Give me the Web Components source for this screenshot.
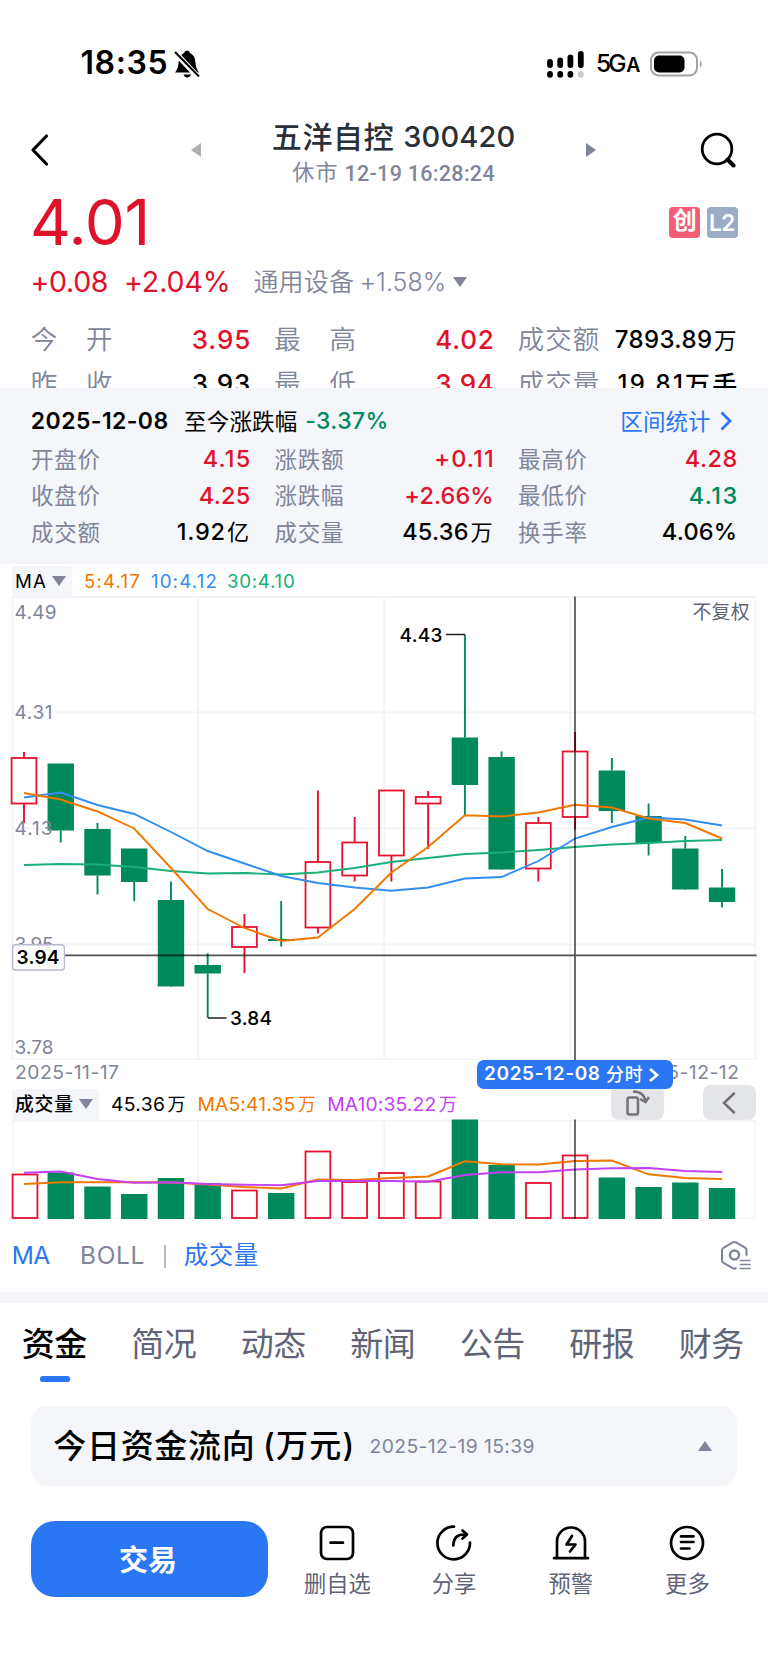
<!DOCTYPE html>
<html lang="zh-CN">
<head>
<meta charset="utf-8">
<title>五洋自控 300420</title>
<style>
html,body{margin:0;background:#fff}
body{width:768px;height:1670px;overflow:hidden;font-family:Inter,"Noto Sans CJK SC",sans-serif;color:#000;
--red:#e0112b;--green:#008a5b;--gray:#80859a;--slate:#5f6478;--blue:#2b76f2;--panel:#f4f6fa}
</style>
</head>
<body>
<stock-page></stock-page>
<script>
const define=(name,html,after)=>{
  const tpl=document.createElement('template');
  tpl.innerHTML=html;
  customElements.define(name,class extends HTMLElement{
    constructor(){super();this.attachShadow({mode:'open'}).appendChild(tpl.content.cloneNode(true));}
    connectedCallback(){if(after)after.call(this,this.shadowRoot);}
  });
};
const base=`:host,*{box-sizing:border-box}.r{display:flex;align-items:center}`;

/* A single line of text spread over a given width through its letter spacing. */
define('fit-text',`<style>:host{display:block;flex:none;white-space:nowrap;line-height:1.2;margin:0 -.05em}span{display:inline-block}</style><span><slot></slot></span>`,
function(root){
  const s=root.querySelector('span'),fs=parseFloat(getComputedStyle(this).fontSize);
  const target=+this.getAttribute('w')+fs*.1,n=[...this.textContent].length;
  const ls=(target-s.getBoundingClientRect().width)/Math.max(1,n-1);
  s.style.letterSpacing=ls+'px';
  this.style.width=target+'px';
});

define('status-bar',`<style>${base}:host{display:block;height:104px;padding:43px 0 0 82px}
.r{height:41px}svg{flex:none}</style>
<div class="r"><fit-text w="84" style="font-size:32px;font-weight:600">18:35</fit-text>
<svg width="26" height="30" viewBox="0 0 26 30" style="margin-left:8px"><path d="M1 23.5Q4 20 4.500 14Q5 6 10 4Q10.500 1.500 13 1.500T16 4Q21 6 21.500 14Q22 20 25 23.500ZM9.500 25.500h7.500q-1 3-3.700 3t-3.800-3Z"/><path d="M-.5 2 25 29" stroke="#fff" stroke-width="5.500"/><path d="M1 3 25 27.500" stroke="#000" stroke-width="2"/></svg>
<svg width="38" height="28" viewBox="0 0 38 28" style="margin-left:347px"><g stroke="#000" stroke-width="5.800" stroke-linecap="round"><path d="M3 12v3M13.200 10.500v4.500M23.400 7.500v7.500M33.800 4v11M3 24v.8M13.200 24v.8M23.400 24v.8"/><path d="M33.800 24v.8" stroke="#ccc"/></g></svg>
<fit-text w="28" style="font-size:24.500px;font-weight:500;margin-left:11px">5G</fit-text><fit-text w="14" style="font-size:19.500px;font-weight:600;margin:4px 0 0 1px">A</fit-text>
<svg width="54" height="26" viewBox="0 0 54 26" style="margin-left:8px"><rect x="1" y="1.500" width="46" height="23" rx="7.500" fill="none" stroke="#a3a3a3" stroke-width="2"/><rect x="4" y="4.500" width="30.500" height="17" rx="5"/><path d="M50 9q3.500 4 0 8Z" fill="#a3a3a3"/></svg></div>`);

define('title-bar',`<style>${base}:host{display:flex;height:92px;align-items:center;padding-left:30px}
svg{flex:none}.c{width:241px;margin-left:72px;height:92px;padding-top:15px;display:flex;flex-direction:column;align-items:center}
.r{height:36px}.s{color:var(--gray);font:500 21.500px Roboto,"Noto Sans CJK SC",sans-serif;padding-top:1px}</style>
<svg width="20" height="34" viewBox="0 0 20 34"><path d="M16.500 3 3 17l13.500 14" fill="none" stroke="#000" stroke-width="3.200" stroke-linecap="round" stroke-linejoin="round"/></svg>
<svg width="10" height="14" viewBox="0 0 10 14" style="margin-left:141px"><path d="M10 0v14L0 7Z" fill="#acadb2"/></svg>
<div class="c"><div class="r" style="color:#2a3037;font-weight:500"><fit-text w="119" style="font-size:30px">五洋自控</fit-text><fit-text w="109" style="font-size:29px;margin-left:11px">300420</fit-text></div>
<div class="r s"><fit-text w="43" style="font-size:22px;font-weight:400">休市</fit-text><fit-text w="148" style="margin-left:8px">12-19 16:28:24</fit-text></div></div>
<svg width="10" height="14" viewBox="0 0 10 14" style="margin-left:72px"><path d="M0 0v14l10-7Z" fill="#80859a"/></svg>
<svg width="36" height="36" viewBox="0 0 36 36" style="margin-left:104px"><circle cx="17" cy="17" r="14.800" fill="none" stroke="#000" stroke-width="2.800"/><path d="m27.500 27.500 6 6" stroke="#000" stroke-width="4" stroke-linecap="round"/></svg>`);

define('price-head',`<style>${base}:host{display:block;padding-left:32px}
.a{height:52px}.b{height:68px;color:var(--red)}.t{width:31px;height:31px;border-radius:4px;color:#fff;display:flex;align-items:center;justify-content:center;line-height:1;font-weight:600;font-size:24px}</style>
<div class="r a"><fit-text w="114" style="font-size:63.500px;color:var(--red);margin-left:-2px">4.01</fit-text><span class="t" style="margin-left:522px;background:#f45c75;padding-bottom:2px">创</span><span class="t" style="margin-left:6.500px;background:#9aacc6"><fit-text w="24" style="font-size:22.500px">L2</fit-text></span></div>
<div class="r b"><fit-text w="75" style="font-size:28.500px">+0.08</fit-text><fit-text w="104" style="font-size:28.500px;margin-left:17px">+2.04%</fit-text>
<fit-text w="98" style="font-size:25px;color:var(--gray);margin-left:24px;font-weight:350">通用设备</fit-text><fit-text w="84" style="font-size:25px;color:var(--gray);margin-left:7px;font-weight:300">+1.58%</fit-text>
<svg width="14" height="10" viewBox="0 0 14 10" style="margin-left:8px"><path d="M0 0h14L7 10Z" fill="#80859a"/></svg></div>`);

/* label on the left, value on the right of a 217px wide cell */
define('quote-cell',`<style>:host{display:flex;align-items:center;justify-content:space-between;width:217px}</style><slot></slot>`);
const cell=(l,lw,v,vw,c,unit,uw)=>`<quote-cell><fit-text class="l" w="${lw}">${l}</fit-text><span class="v" style="color:${c}"><fit-text w="${vw}">${v}</fit-text>${unit?`<fit-text class="u" w="${uw}">${unit}</fit-text>`:''}</span></quote-cell>`;
const R='var(--red)',G='var(--green)',K='#000';
const cells=`.g{display:grid;grid-template-columns:217px 217px 217px;column-gap:26.500px}.v{display:flex;font-weight:500}.l{color:var(--gray)}.u{margin-left:3px;font-weight:400;font-size:.94em;align-self:center}`;

define('day-quotes',`<style>${base}${cells}:host{display:block;height:72px;overflow:hidden;padding:2px 0 0 32px}
.g{grid-auto-rows:44px}.l{font-size:26.500px;font-weight:350}.v{font-size:26px}.g .s{font-size:24px;padding-top:1px}</style>
<div class="g">${cell('今',25,'3.95',56,R).replace('</fit-text><span','</fit-text><fit-text class="l" w="25" style="margin-right:auto;margin-left:29px">开</fit-text><span')}
${cell('最',25,'4.02',56,R).replace('</fit-text><span','</fit-text><fit-text class="l" w="25" style="margin-right:auto;margin-left:29px">高</fit-text><span')}
${cell('成交额',79,'7893.89',95,K,'万',21).replace('class="v"','class="v s"')}
${cell('昨',25,'3.93',56,K).replace('</fit-text><span','</fit-text><fit-text class="l" w="25" style="margin-right:auto;margin-left:29px">收</fit-text><span')}
${cell('最',25,'3.94',56,R).replace('</fit-text><span','</fit-text><fit-text class="l" w="25" style="margin-right:auto;margin-left:29px">低</fit-text><span')}
${cell('成交量',79,'19.81',63,K,'万手',50).replace('class="v"','class="v s"').replace('class="u"','class="u" style="font-size:25px;font-weight:500"')}</div>`);

define('candle-panel',`<style>${base}${cells}:host{display:block;height:176px;background:var(--panel);padding:14px 0 0 32px}
.h{height:38px;margin-bottom:1px}.g{grid-auto-rows:36.500px}.l{font-size:22.500px}.v{font-size:23.500px}</style>
<div class="r h"><fit-text w="135" style="font-size:23px;font-weight:600;margin-top:1px">2025-12-08</fit-text><fit-text w="111" style="font-size:22.500px;margin-left:17px">至今涨跌幅</fit-text><fit-text w="81" style="font-size:23px;font-weight:500;color:var(--green);margin-left:9px;margin-top:1px">-3.37%</fit-text>
<fit-text w="88" style="font-size:22.500px;color:var(--blue);margin-left:233px">区间统计</fit-text><svg width="12" height="20" viewBox="0 0 12 20" style="margin-left:11px"><path d="m1.500 1.500 8.500 8.500-8.500 8.500" fill="none" stroke="#2b76f2" stroke-width="2.800"/></svg></div>
<div class="g">${cell('开盘价',67,'4.15',45,R)}${cell('涨跌额',67,'+0.11',57,R)}${cell('最高价',67,'4.28',50,R)}
${cell('收盘价',67,'4.25',49,R)}${cell('涨跌幅',67,'+2.66%',87,R)}${cell('最低价',67,'4.13',46,G)}
${cell('成交额',67,'1.92',46,K,'亿',21)}${cell('成交量',67,'45.36',64,K,'万',21)}${cell('换手率',67,'4.06%',73,K)}</div>`);

const tri=`<svg width="14" height="10" viewBox="0 0 14 10" style="flex:none"><path d="M0 0h14L7 10Z" fill="#80859a"/></svg>`;
const chip=`.chip{background:var(--panel);border-radius:3px;display:flex;align-items:center;padding-left:4px}`;
define('ma-legend',`<style>${base}${chip}:host{display:flex;align-items:center;height:32px;padding-left:12px;font-size:18.700px}.chip{width:60px;height:30px;margin-top:2px}fit-text{margin-top:4px}.chip fit-text{margin-top:2px}</style>
<div class="chip"><fit-text w="29" style="margin-right:6px">MA</fit-text>${tri}</div>
<fit-text w="54" style="color:#f07800;margin-left:12px">5:4.17</fit-text><fit-text w="64" style="color:#338ef0;margin-left:12px">10:4.12</fit-text><fit-text w="66" style="color:#1aae78;margin-left:11px">30:4.10</fit-text>`);

/* [up, bodyTop, bodyBottom, wickTop, wickBottom, volumeTop] */
const D=[[1,758,803.5,752,823,1174.5],[0,763.5,830.5,763.5,842.5,1172.5],[0,829,875.5,823,894.5,1186.5],[0,848.5,882,848.5,901,1194],[0,900,986.5,881.5,986,1178],[0,965,973.5,953.5,1018,1183],[1,927,947,914,973,1190.5],[0,939,941,901,946.5,1193],[1,862,927.5,790.5,933.5,1151.5],[1,842.5,875.5,817,881.5,1182],[1,790.5,855.5,790.5,881.5,1173],[1,797,803.5,791,849,1181.5],[0,737.5,785,634.5,816,1119.5],[0,757,869.5,751.5,869,1165],[1,823,868.5,817,881.5,1183],[1,751.5,817,732,829.5,1155.5],[0,770.5,811,758,823,1177.5],[0,816,843,803.5,855.5,1187],[0,848.5,889.5,836,889,1182.5],[0,887.5,902,869,907.5,1188]];
const X=i=>24+i*36.74;
const line=(a,c)=>`<polyline points="${a.map((y,i)=>X(i).toFixed(1)+','+y).join(' ')}" fill="none" stroke="${c}" stroke-width="1.900"/>`;
const box=(i,up,t,b,dx=0)=>up?`<rect x="${X(i)-12.4+dx}" y="${t}" width="24.800" height="${b-t}" fill="none" stroke="#e6112e" stroke-width="1.800"/>`:`<rect x="${X(i)-13.2}" y="${t}" width="26.400" height="${b-t}" fill="#008a5b"/>`;
const candles=D.map(([u,t,b,wt,wb],i)=>{const c=u?'#e6112e':'#008a5b';return `<path d="M${X(i)} ${wt}V${t}M${X(i)} ${b}V${wb}" stroke="${c}" stroke-width="1.900"/>`+box(i,u,t,b);}).join('');
const bars=D.map((d,i)=>box(i,d[0],d[5],d[0]?1218:1219,i?0:1)).join('');
define('kline-chart',`<style>:host{display:block;height:464px}svg{display:block}text{font-family:Inter,"Noto Sans CJK SC",sans-serif;font-size:19px}.a{fill:#80859a}.m{font-weight:500}</style>
<svg width="768" height="464" viewBox="0 596 768 464"><path d="M12.500 597H755.500V1059.500H12.500ZM12.500 712.300H755.500M12.500 828.300H755.500M12.500 944.300H755.500M198.200 597V1059M384.300 597V1059M570 597V1059" fill="none" stroke="#f3f4fa" stroke-width="1.800"/>
${candles}
${line([865,864,864.5,867,871,873.5,873,874.5,872.5,868,862,858,854,852.5,850,847,844.5,843,841,840],'#1aae78')}
${line([797.5,792.5,805,814,832,851,863.5,876,883,887.5,890.7,887.5,878.5,877,861,838.5,827,817.5,819.5,825.5],'#338ef0')}
${line([793,799.5,811.5,828.5,868,909,928,941,937.5,909,872.5,847,815.2,816.5,812.5,804.8,807.5,818.5,823,838.5],'#f07800')}
<g class="a"><text x="14.500" y="618.500" textLength="42">4.49</text><text x="14.500" y="719.300" textLength="38">4.31</text><text x="14.500" y="835.300" textLength="38">4.13</text><text x="14.500" y="951.300" textLength="39">3.95</text><text x="14.500" y="1053.800" textLength="39">3.78</text></g>
<text x="692.500" y="618.500" textLength="57" fill="#5f6478" style="font-size:18.800px">不复权</text>
<path d="M446 634.500H465M208 1018H226.500" stroke="#222" stroke-width="1.300"/>
<text class="m" x="399.500" y="641.500" textLength="43">4.43</text><text class="m" x="230" y="1025" textLength="42">3.84</text>
<path d="M12 955.300H756.500M575 596.500V1060" stroke="#000" stroke-opacity=".68" stroke-width="1.700"/>
<rect x="12.600" y="944.700" width="51.800" height="25.300" rx="3" fill="#fff" stroke="#b5bacb" stroke-width="1.400"/><text x="16.500" y="964.300" textLength="43" style="font-weight:600">3.94</text></svg>`);

define('date-axis',`<style>${base}:host{display:flex;justify-content:space-between;height:29px;position:relative;padding:1px 30px 0 16px;font-size:19.300px;color:var(--gray)}
.pill{position:absolute;z-index:2;left:477px;top:0;width:196px;height:29px;border-radius:7px;background:var(--blue);color:#fff;display:flex;align-items:center;padding-left:8px;font-weight:600;font-size:19px}</style>
<fit-text w="102">2025-11-17</fit-text><fit-text w="107">2025-12-12</fit-text>
<div class="pill"><fit-text w="114">2025-12-08</fit-text><fit-text w="35" style="font-size:18px;font-weight:500;margin-left:7px">分时</fit-text><svg width="12" height="16" viewBox="0 0 12 16" style="margin-left:6px"><path d="m2 2 7 6-7 6" fill="none" stroke="#fff" stroke-width="2.800"/></svg></div>`);

define('volume-legend',`<style>${base}${chip}:host{display:flex;align-items:center;height:30px;padding-left:12px;font-size:19.300px}.chip{width:87px;height:31px;font-weight:500}
.k{height:34.500px;width:53.500px;border-radius:8px;background:#e4e5e9;margin-top:-3px;flex:none;display:flex;align-items:center;justify-content:center}fit-text{margin-top:2px}.u{font-size:18px;margin-left:3.500px;margin-top:1px}</style>
<div class="chip"><fit-text w="56" style="font-size:18.800px;margin-right:6px">成交量</fit-text>${tri}</div>
<fit-text w="52" style="margin-left:12px">45.36</fit-text><fit-text class="u" w="16.500">万</fit-text>
<fit-text w="96" style="margin-left:12.500px;color:#f07800">MA5:41.35</fit-text><fit-text class="u" w="16.500" style="color:#f07800">万</fit-text>
<fit-text w="107" style="margin-left:12px;color:#c43ff5">MA10:35.22</fit-text><fit-text class="u" w="16.500" style="color:#c43ff5">万</fit-text>
<div class="k" style="margin-left:auto"><svg width="26" height="28" viewBox="0 0 26 28" fill="none" stroke="#737479" stroke-width="2.500"><rect x="3.500" y="8.500" width="10.500" height="17" rx="2"/><path d="M9 2.500q11 0 12.500 10M16 10l5.500 3 3.500-5"/></svg></div>
<div class="k" style="margin:-3px 12px 0 38.500px"><svg width="16" height="24" viewBox="0 0 16 24"><path d="M13 2.500 3 12l10 9.500" fill="none" stroke="#6f7075" stroke-width="2.500" stroke-linecap="round"/></svg></div>`);

define('volume-chart',`<style>:host{display:block;height:101px}svg{display:block}</style>
<svg width="768" height="101" viewBox="0 1119 768 101"><path d="M12.500 1120.500H755.500V1218H12.500ZM198.200 1120V1218M384.300 1120V1218M570 1120V1218" fill="none" stroke="#f3f4fa" stroke-width="1.600"/>${bars}
${line([1184,1182.3,1182.3,1182.3,1182.5,1184.5,1187,1188.5,1179.5,1180,1178,1176.5,1161.3,1164.3,1164.5,1161,1160.5,1174.3,1178,1179],'#f07800')}
${line([1172.7,1171.5,1179,1182.7,1182.3,1184,1184.7,1185.3,1181,1181,1181,1181.7,1175,1172.3,1172.3,1169.5,1168.3,1168,1171,1172],'#c43ff5')}
<path d="M575 1119.500V1219" stroke="#000" stroke-opacity=".68" stroke-width="1.700"/></svg>`);

define('indicator-tabs',`<style>${base}:host{display:flex;align-items:center;height:72px;padding-left:13px;font-size:24.500px;color:var(--gray)}i{width:1.500px;height:23px;background:#b3b7c6;margin-left:21px}</style>
<fit-text w="36" style="color:var(--blue)">MA</fit-text><fit-text w="62" style="margin-left:31px">BOLL</fit-text><i></i><fit-text w="72" style="color:var(--blue);margin-left:18px">成交量</fit-text>
<svg width="32" height="32" viewBox="0 0 32 32" style="margin:-2px 0 0 463.500px" fill="none" stroke="#80859a" stroke-width="2.100" stroke-linecap="round"><path d="M26.500 16V11q0-1.500-1.500-2.400l-9-5.200q-1.600-.9-3.200 0l-9 5.200Q2 9.500 2 11v10.500q0 1.500 1.600 2.400l9 5.300q1.600.9 3.200-.1"/><circle cx="14.500" cy="16" r="4.500" stroke-width="2.500"/><path d="M20.500 21.500h9.500M20.500 25.500h9.500M20.500 29.500h9.500" stroke-width="1.700"/></svg>`);

define('section-tabs',`<style>${base}:host{display:block;border-top:11px solid var(--panel);height:114px;padding-left:23.500px}
.g{display:grid;grid-template-columns:repeat(7,109.500px);height:84px;align-items:center;font-size:33px;color:var(--slate)}.on{color:#000;font-weight:500}.bar{width:30px;height:6px;border-radius:2.500px;background:var(--blue);margin:-11px 0 0 16.500px}</style>
<div class="g"><fit-text class="on" w="62">资金</fit-text><fit-text w="62">简况</fit-text><fit-text w="62">动态</fit-text><fit-text w="62">新闻</fit-text><fit-text w="62">公告</fit-text><fit-text w="62">研报</fit-text><fit-text w="62">财务</fit-text></div><div class="bar"></div>`);

define('flow-card',`<style>${base}:host{display:flex;align-items:center;margin:0 31px;height:80px;border-radius:16px;background:var(--panel);padding-left:24px}</style>
<fit-text w="198" style="font-size:33px;font-weight:500;margin-top:1px">今日资金流向</fit-text><fit-text w="88" style="font-size:32px;font-weight:500;margin-left:10px;margin-top:1px">(万元)</fit-text>
<fit-text w="163" style="font-size:19.300px;color:var(--gray);margin-left:17px;margin-top:2px">2025-12-19 15:39</fit-text>
<svg width="14" height="10" viewBox="0 0 14 10" style="margin-left:auto;margin-right:25px"><path d="M0 10h14L7 0Z" fill="#80859a"/></svg>`);

define('action-item',`<style>:host{display:flex;flex-direction:column;align-items:center;width:116.700px;padding-top:3px;color:var(--slate);font-size:22.300px;line-height:28px}::slotted(svg){display:block;margin-bottom:8px}</style><slot name="icon"></slot><slot></slot>`);
const ico=p=>`<svg slot="icon" width="38" height="38" viewBox="0 0 38 38" fill="none" stroke="#000" stroke-width="2.700" stroke-linecap="round" stroke-linejoin="round">${p}</svg>`;
define('action-bar',`<style>:host{display:flex;margin:34.500px 0 0 31px}.b{width:237px;height:76.500px;border-radius:24px;background:var(--blue);color:#fff;font-size:29px;font-weight:600;display:flex;align-items:center;justify-content:center;padding:0 3px 2px 0;box-sizing:border-box;margin-right:11px}</style>
<div class="b">交易</div>
<action-item>${ico('<rect x="3" y="3" width="32" height="32" rx="6"/><path d="M12.500 18.700h12.500"/>')}删自选</action-item>
<action-item>${ico('<path d="M19 2.700A16.300 16.300 0 1 0 35 18.500M18.300 21.500Q18.500 10.500 29 10.500M27.500 6.500l4.500 4-4.500 4"/>')}分享</action-item>
<action-item>${ico('<path d="M5 34V17.500a14 14 0 0 1 28 0V34M2 34.200h34M20 12l-5.500 8.500h9L18 27.500"/>')}预警</action-item>
<action-item>${ico('<circle cx="19" cy="19" r="16"/><path d="M13 12.300h12.500M13 18h12.500M13 24.500h8.500"/>')}更多</action-item>`);

define('stock-page',`<style>:host{display:block;width:768px;height:1670px;background:#fff}</style>
<status-bar></status-bar><title-bar></title-bar><price-head></price-head><day-quotes></day-quotes><candle-panel></candle-panel>
<ma-legend></ma-legend><kline-chart></kline-chart><date-axis></date-axis><volume-legend></volume-legend><volume-chart></volume-chart>
<indicator-tabs></indicator-tabs><section-tabs></section-tabs><flow-card></flow-card><action-bar></action-bar>`);
</script>
</body>
</html>
